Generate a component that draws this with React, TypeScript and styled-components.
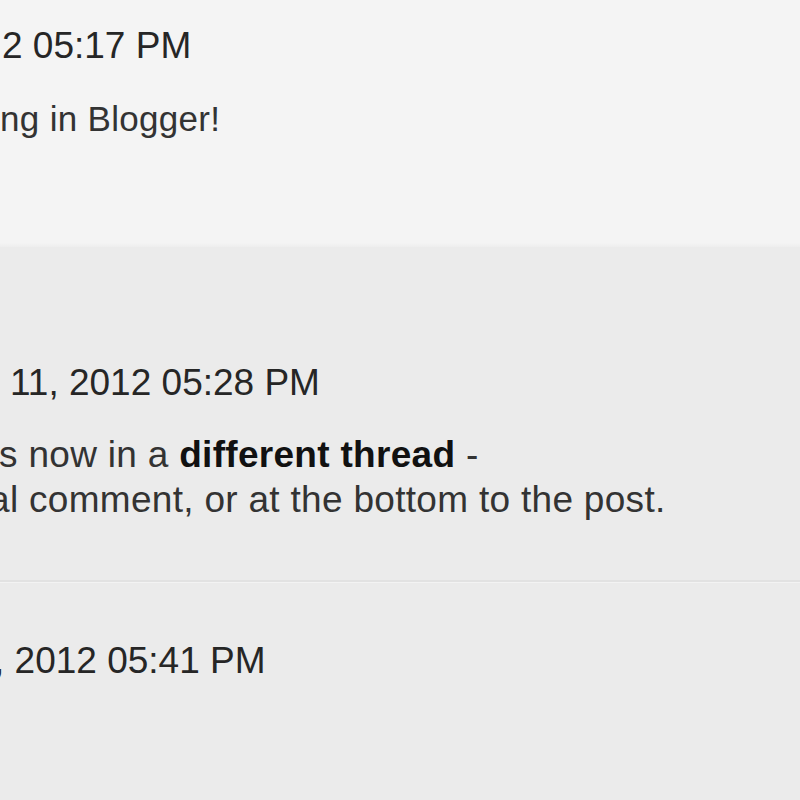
import { createGlobalStyle, styled } from "styled-components";

const GlobalStyle = createGlobalStyle`
  html, body {
    margin: 0;
    padding: 0;
    background: #ebebeb;
  }
  body {
    font-family: "Liberation Sans", Arial, Helvetica, sans-serif;
  }
`;

function Line({
  offset = 0,
  kind,
  size = 37,
  children,
}: {
  offset?: number;
  kind: "date" | "body";
  size?: number;
  children: React.ReactNode;
}) {
  return (
    <TextLine $kind={kind} $size={size} style={{ marginLeft: offset }}>
      {children}
    </TextLine>
  );
}

export default function App() {
  return (
    <Page>
      <GlobalStyle />
      <Comment $tone="light" $top={23} $bottom={0} $height={247}>
        <Line kind="date" offset={2}>
          2 05:17 PM
        </Line>
        <Body $gap={28}>
          <Line kind="body" size={35} offset={-8}>
            ing in Blogger!
          </Line>
        </Body>
      </Comment>
      <Comment $tone="dark" $top={113} $bottom={60}>
        <Line kind="date" offset={10}>
          11, 2012 05:28 PM
        </Line>
        <Body $gap={27}>
          <Line kind="body" offset={-1}>
            s now in a <strong>different thread</strong> -
          </Line>
          <Line kind="body" offset={-11}>
            al comment, or at the bottom to the post.
          </Line>
        </Body>
      </Comment>
      <Comment $tone="dark" $top={55} $bottom={120} $divider>
        <Line kind="date" offset={-6}>
          , 2012 05:41 PM
        </Line>
      </Comment>
    </Page>
  );
}

const Page = styled.div`
  width: 800px;
  height: 800px;
  overflow: hidden;
  background: #ebebeb;
`;

const Comment = styled.section<{
  $tone: "light" | "dark";
  $top: number;
  $bottom: number;
  $height?: number;
  $divider?: boolean;
}>`
  box-sizing: border-box;
  padding: ${(p) => p.$top}px 0 ${(p) => p.$bottom}px;
  height: ${(p) => (p.$height ? `${p.$height}px` : "auto")};
  background: ${(p) =>
    p.$tone === "light"
      ? "linear-gradient(#f4f4f4 0, #f4f4f4 calc(100% - 4px), #eeeeee 100%)"
      : "#ebebeb"};
  border-top: ${(p) => (p.$divider ? "1px solid #f3f3f3" : "none")};
  box-shadow: ${(p) => (p.$divider ? "0 -2px 0 #e2e2e2" : "none")};
`;

const Body = styled.div<{ $gap: number }>`
  margin-top: ${(p) => p.$gap}px;
`;

const TextLine = styled.div<{ $kind: "date" | "body"; $size: number }>`
  font-size: ${(p) => p.$size}px;
  line-height: 45px;
  white-space: nowrap;
  letter-spacing: ${(p) => (p.$kind === "body" ? "0.3px" : "0")};
  color: ${(p) => (p.$kind === "date" ? "#262626" : "#333333")};

  strong {
    font-weight: bold;
    color: #111111;
  }
`;
